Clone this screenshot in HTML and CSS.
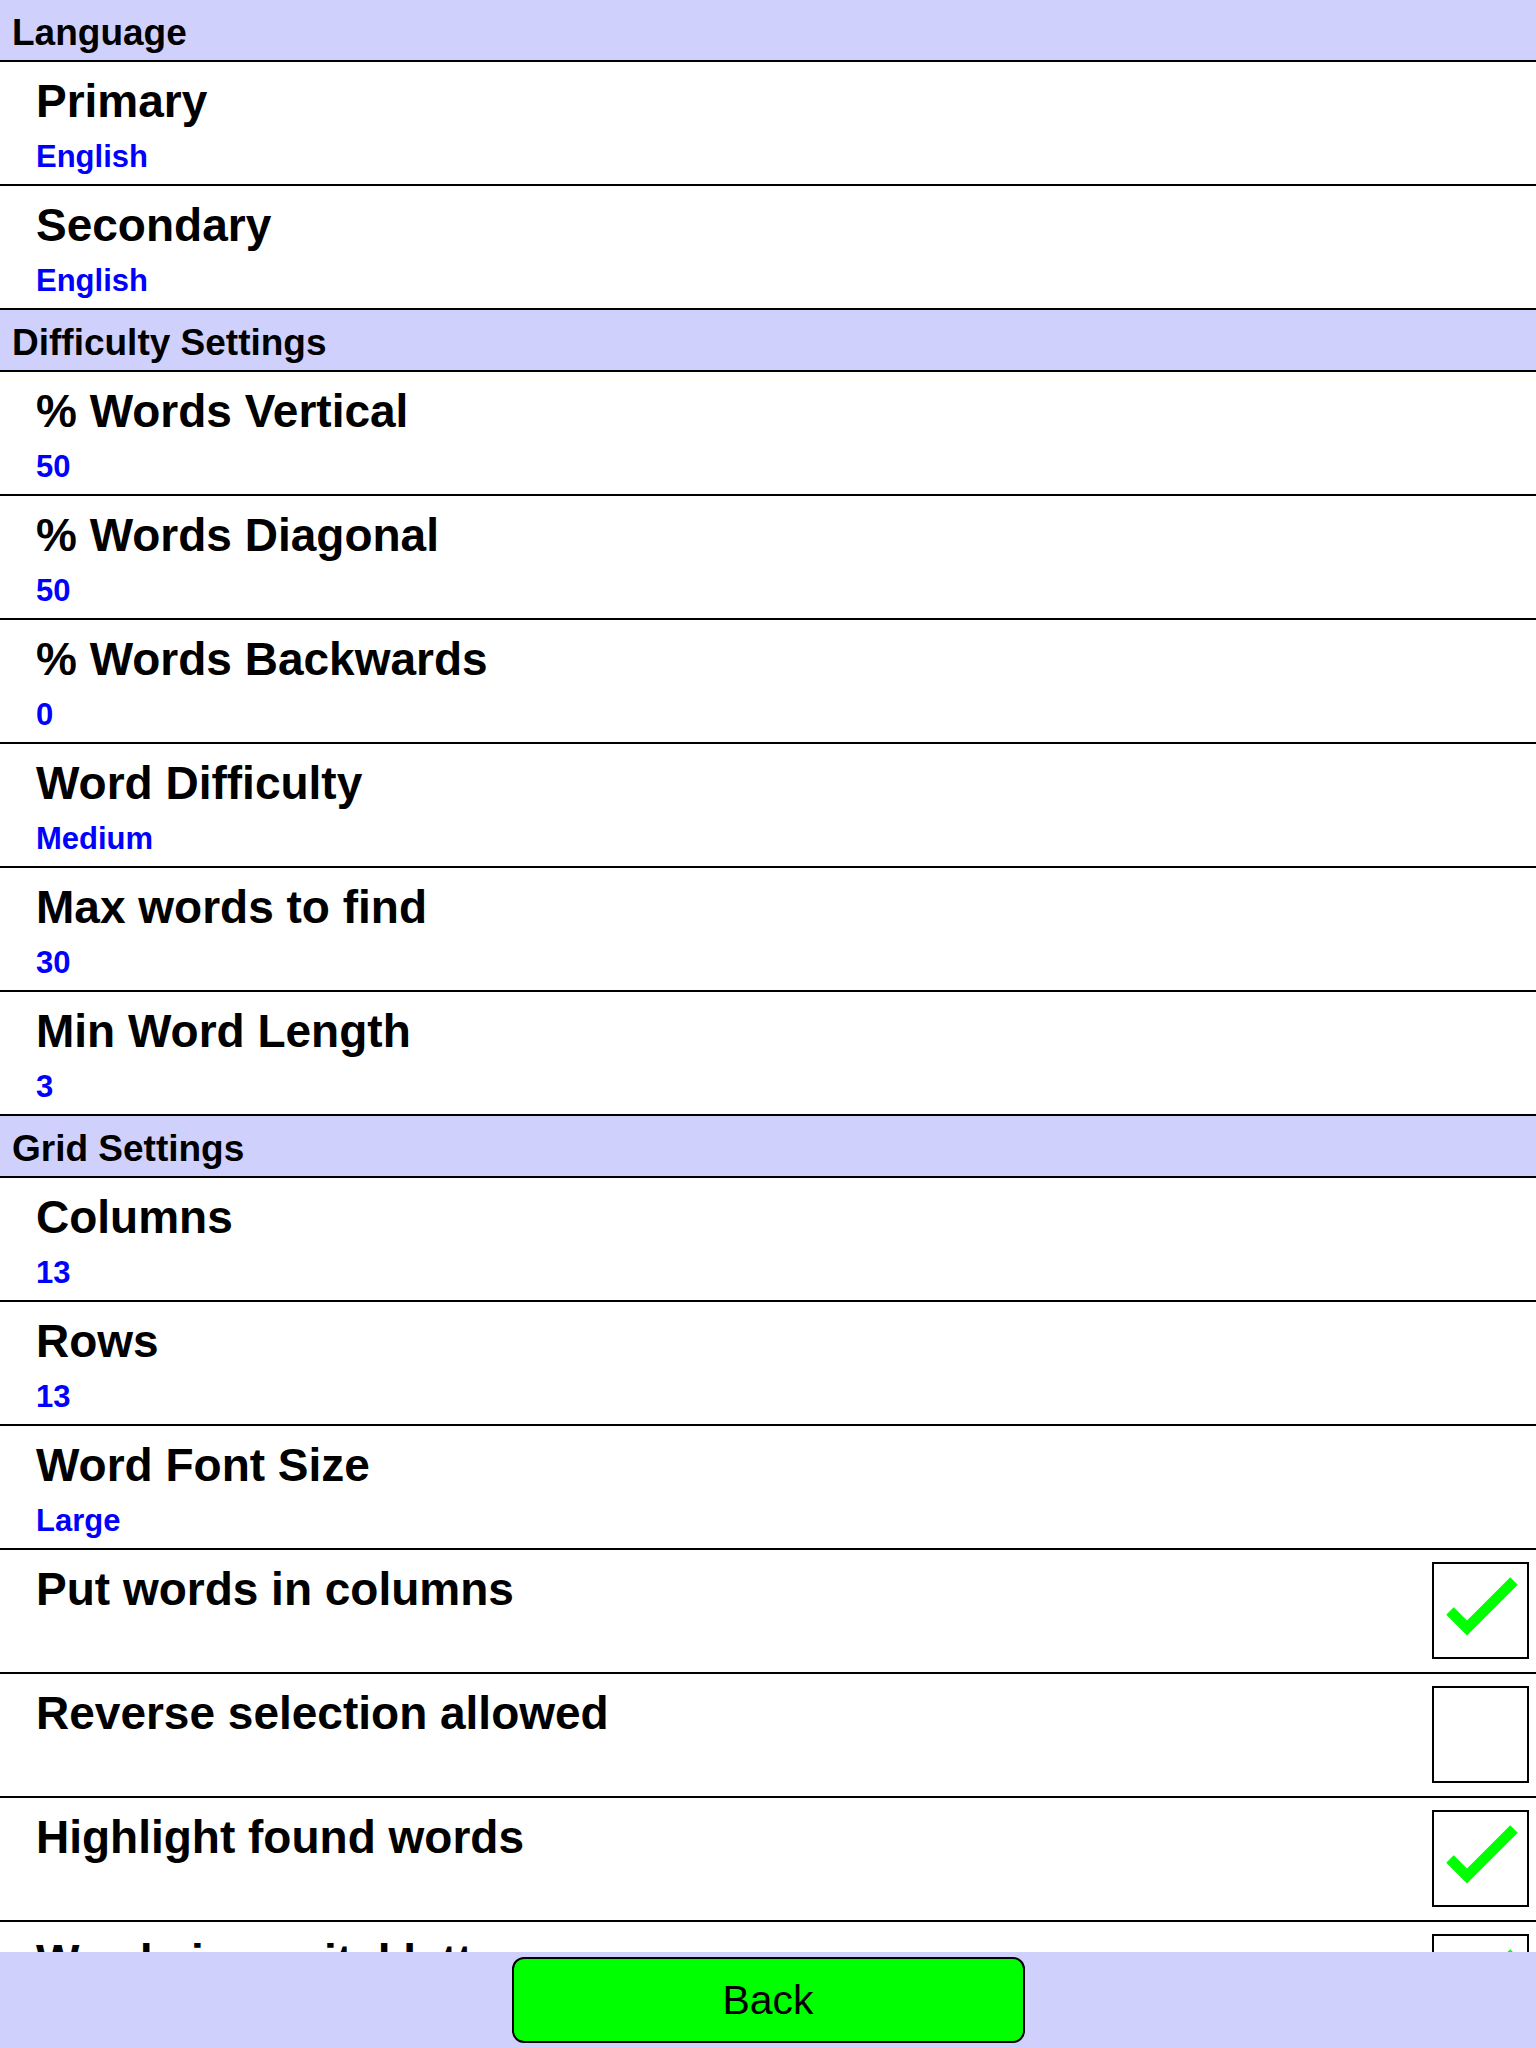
FILE: index.html
```html
<!DOCTYPE html>
<html lang="en">

<head>
    <meta charset="UTF-8">
    <meta name="viewport" content="width=device-width, initial-scale=1.0">
    <title>Settings</title>
    <link rel="stylesheet" href="styles.css">
</head>

<body>
    <div class="screen">
        <main class="list">
            <div class="section">Language</div>
            <div class="row">
                <div class="row-text">
                    <div class="title">Primary</div>
                    <div class="value">English</div>
                </div>
            </div>
            <div class="row">
                <div class="row-text">
                    <div class="title">Secondary</div>
                    <div class="value">English</div>
                </div>
            </div>

            <div class="section">Difficulty Settings</div>
            <div class="row">
                <div class="row-text">
                    <div class="title">% Words Vertical</div>
                    <div class="value">50</div>
                </div>
            </div>
            <div class="row">
                <div class="row-text">
                    <div class="title">% Words Diagonal</div>
                    <div class="value">50</div>
                </div>
            </div>
            <div class="row">
                <div class="row-text">
                    <div class="title">% Words Backwards</div>
                    <div class="value">0</div>
                </div>
            </div>
            <div class="row">
                <div class="row-text">
                    <div class="title">Word Difficulty</div>
                    <div class="value">Medium</div>
                </div>
            </div>
            <div class="row">
                <div class="row-text">
                    <div class="title">Max words to find</div>
                    <div class="value">30</div>
                </div>
            </div>
            <div class="row">
                <div class="row-text">
                    <div class="title">Min Word Length</div>
                    <div class="value">3</div>
                </div>
            </div>

            <div class="section">Grid Settings</div>
            <div class="row">
                <div class="row-text">
                    <div class="title">Columns</div>
                    <div class="value">13</div>
                </div>
            </div>
            <div class="row">
                <div class="row-text">
                    <div class="title">Rows</div>
                    <div class="value">13</div>
                </div>
            </div>
            <div class="row">
                <div class="row-text">
                    <div class="title">Word Font Size</div>
                    <div class="value">Large</div>
                </div>
            </div>
            <div class="row">
                <div class="row-text">
                    <div class="title">Put words in columns</div>
                </div>
                <div class="check">
                    <svg viewBox="2 2 93 93"><polyline points="18,49 35,66 82,19" /></svg>
                </div>
            </div>
            <div class="row">
                <div class="row-text">
                    <div class="title">Reverse selection allowed</div>
                </div>
                <div class="check"></div>
            </div>
            <div class="row">
                <div class="row-text">
                    <div class="title">Highlight found words</div>
                </div>
                <div class="check">
                    <svg viewBox="2 2 93 93"><polyline points="18,49 35,66 82,19" /></svg>
                </div>
            </div>
            <div class="row">
                <div class="row-text">
                    <div class="title">Words in capital letters</div>
                </div>
                <div class="check">
                    <svg viewBox="2 2 93 93"><polyline points="18,49 35,66 82,19" /></svg>
                </div>
            </div>
        </main>
        <footer class="footer">
            <button class="back-button">Back</button>
        </footer>
    </div>
</body>

</html>
```

FILE: styles.css
```css
body {
    font-family: 'Liberation Sans', Arial, sans-serif;
    margin: 0;
    padding: 0;
    background-color: #fff;
    color: #000;
}

.screen {
    display: flex;
    flex-direction: column;
    height: 100vh;
}

.list {
    flex: 1;
    overflow-y: auto;
    scrollbar-width: none;
}

.section {
    height: 62px;
    box-sizing: border-box;
    padding: 12px 0 0 12px;
    background-color: #d0d0fc;
    border-bottom: 2px solid #000;
    font-size: 37px;
    font-weight: bold;
    line-height: 41px;
}

.row {
    display: flex;
    justify-content: space-between;
    align-items: flex-start;
    height: 124px;
    box-sizing: border-box;
    border-bottom: 2px solid #000;
    padding-left: 36px;
}

.row-text {
    padding-top: 13px;
}

.title {
    font-size: 46px;
    font-weight: bold;
    line-height: 52px;
}

.value {
    margin-top: 12px;
    font-size: 31px;
    font-weight: bold;
    line-height: 36px;
    color: #0000ff;
}

.check {
    width: 97px;
    height: 97px;
    box-sizing: border-box;
    border: 2px solid #000;
    margin: 12px 7px 0 0;
    background-color: #fff;
}

.check svg {
    display: block;
    width: 93px;
    height: 93px;
}

.check polyline {
    fill: none;
    stroke: #00ff00;
    stroke-width: 10.6;
    stroke-linecap: butt;
    stroke-linejoin: miter;
}

.footer {
    height: 96px;
    flex-shrink: 0;
    background-color: #d0d0fc;
    display: flex;
    justify-content: center;
    align-items: flex-start;
}

.back-button {
    width: 513px;
    height: 86px;
    margin-top: 5px;
    padding: 0;
    background-color: #00ff00;
    border: 2px solid #000;
    border-radius: 12px;
    font-family: 'Liberation Sans', Arial, sans-serif;
    font-size: 41px;
    color: #000;
    cursor: pointer;
}
```
